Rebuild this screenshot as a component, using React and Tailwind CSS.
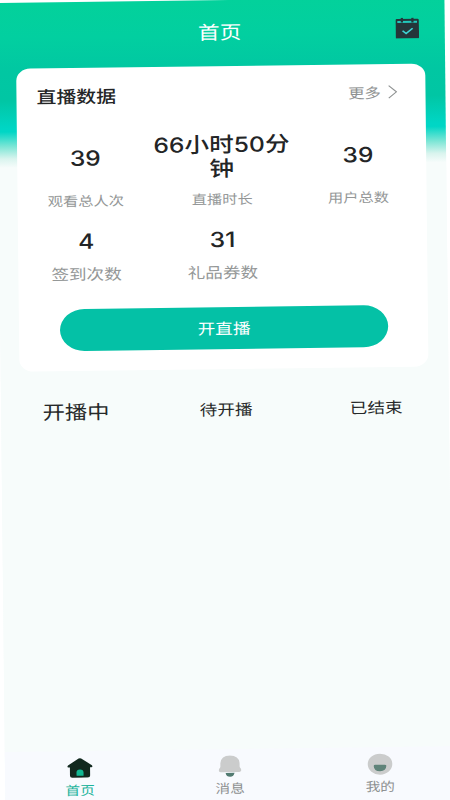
const stats = [
    { value: "39", label: "观看总人次" },
    { value: "66小时50分钟", label: "直播时长" },
    { value: "39", label: "用户总数" },
];

const extraStats = [
    { value: "4", label: "签到次数" },
    { value: "31", label: "礼品券数" },
];

const CalendarIcon = () => (
    <svg viewBox="0 0 20 21" className="h-[21px] w-5" fill="none">
        <rect x="0" y="1.2" width="20" height="19.6" rx="1.2" fill="#25363a" />
        <path d="M1.6 4.2H18.4" stroke="#22c9bd" strokeWidth="1.9" />
        <path d="M5.5 0V4.8M14.5 0V4.8" stroke="#25363a" strokeWidth="1.9" />
        <path d="M6 13L9 15.8L14.6 10.6" stroke="#3fd3d3" strokeWidth="1.5" />
    </svg>
);

const HomeIcon = () => (
    <svg viewBox="0 0 22 20" className="h-5 w-[22px]">
        <path
            d="M9.9 .5Q11 -.2 12.1 .5L21.2 7.3Q22.4 8.9 20.9 9.3H19.6V17.6Q19.6 19.6 17.6 19.6H4.4Q2.4 19.6 2.4 17.6V9.3H1.1Q-.4 8.9 .8 7.3Z"
            fill="#12291f"
        />
        <path d="M8 17.8V14.4Q8 11.4 11 11.4Q14 11.4 14 14.4V17.8Z" fill="#12b893" />
    </svg>
);

const BellIcon = () => (
    <svg viewBox="0 0 20 22" className="h-[22px] w-5">
        <path d="M6.2 17.8H13.8Q13.2 21.7 10 21.7Q6.8 21.7 6.2 17.8Z" fill="#527b71" />
        <path
            d="M10 .5Q17.6 .7 18.2 8V11.5Q18.3 12.6 19.2 13.6Q20.4 16.8 18 17H2Q-.4 16.8 .8 13.6Q1.7 12.6 1.8 11.5V8Q2.4 .7 10 .5Z"
            fill="#cbcccc"
        />
    </svg>
);

const UserIcon = () => (
    <svg viewBox="0 0 22 22" className="h-[22px] w-[22px]">
        <circle cx="11" cy="11" r="10.5" fill="#cbcccc" />
        <path d="M5.6 12.8Q5.6 11.6 7 11.6H15Q16.4 11.6 16.4 12.8Q16.2 18.2 11 18.2Q5.8 18.2 5.6 12.8Z" fill="#5f8379" />
    </svg>
);

const Stat = ({ value, label }) => (
    <div className="flex flex-col items-center">
        <div className="-mx-2 flex h-12 w-[126px] items-center justify-center text-center font-['Inter','Noto_Sans_CJK_SC',sans-serif] text-[21px] leading-6 font-medium text-[#232526]">
            {value}
        </div>
        <div className="mt-2 h-5 text-[13px] leading-5 text-[#949797]">{label}</div>
    </div>
);

const App = () => {
    return (
        <div className="h-[800px] w-[450px] overflow-hidden bg-white font-['Noto_Sans_CJK_SC',sans-serif]">
            <div className="flex h-[810px] w-[382px] origin-top-left [transform:matrix(1.172,-0.0152,0.0108,1,-3.3,3)] flex-col bg-[#f7fcfb] bg-[linear-gradient(180deg,#03d19b_0px,#02cfa0_35px,#01c7a2_70px,#01c6a4_98px,#00d6c5_126px,#00d6c5_129px,#7ee6d6_144px,#d9f4ee_156px,#f7fcfb_165px)] bg-no-repeat">
                <header className="grid h-[66px] shrink-0 grid-cols-[1fr_auto_1fr] items-start pt-[18px] pr-[22px] pl-5">
                    <span />
                    <h1 className="text-[18.5px] leading-[26px] text-white">首页</h1>
                    <div className="flex justify-end pt-[2px]">
                        <CalendarIcon />
                    </div>
                </header>

                <section className="ml-4 h-[303px] w-[349px] shrink-0 rounded-xl bg-white pt-[13px]">
                    <div className="flex h-[30px] items-center justify-between pr-6 pl-[17px]">
                        <h2 className="text-[17px] font-medium text-[#232526]">直播数据</h2>
                        <div className="flex items-center gap-[6px] text-sm text-[#8f9292]">
                            更多
                            <svg viewBox="0 0 8 14" className="h-[14px] w-2" fill="none" stroke="#8f9292" strokeWidth="1">
                                <path d="M.6 .8L7.2 7L.6 13.2" />
                            </svg>
                        </div>
                    </div>

                    <div className="mt-6 grid grid-cols-3">
                        {stats.map((item) => (
                            <Stat key={item.label} value={item.value} label={item.label} />
                        ))}
                    </div>

                    <div className="mt-[19px] grid grid-cols-3">
                        {extraStats.map((item) => (
                            <div key={item.label} className="flex flex-col items-center">
                                <div className="font-['Inter','Noto_Sans_CJK_SC',sans-serif] text-[21px] leading-6 font-medium text-[#232526]">
                                    {item.value}
                                </div>
                                <div className="mt-[10px] text-[15px] leading-5 text-[#949797]">{item.label}</div>
                            </div>
                        ))}
                    </div>

                    <button className="mx-auto mt-[25px] flex h-[42px] w-[280px] items-center justify-center rounded-full bg-[#04c1a6] pl-px text-[15px] text-white">
                        开直播
                    </button>
                </section>

                <div className="mt-5 -mr-[2px] grid h-10 shrink-0 grid-cols-3 items-center text-center text-[15px] text-[#262929]">
                    <span className="text-[19px]">开播中</span>
                    <span>待开播</span>
                    <span>已结束</span>
                </div>

                <main className="flex-1" />

                <nav className="h-[61px] shrink-0 bg-[#f8fafe] pt-[6px] text-[12.5px] leading-[18px] text-[#8d9090]">
                    <div className="-mr-[2px] grid grid-cols-3">
                        <div className="flex flex-col items-center gap-[2px] text-[#1cb39b]">
                            <div className="flex h-[22px] items-center">
                                <HomeIcon />
                            </div>
                            首页
                        </div>
                        <div className="flex flex-col items-center gap-[2px]">
                            <BellIcon />
                            消息
                        </div>
                        <div className="flex flex-col items-center gap-[2px]">
                            <UserIcon />
                            我的
                        </div>
                    </div>
                </nav>
            </div>
        </div>
    );
};

export default App;
